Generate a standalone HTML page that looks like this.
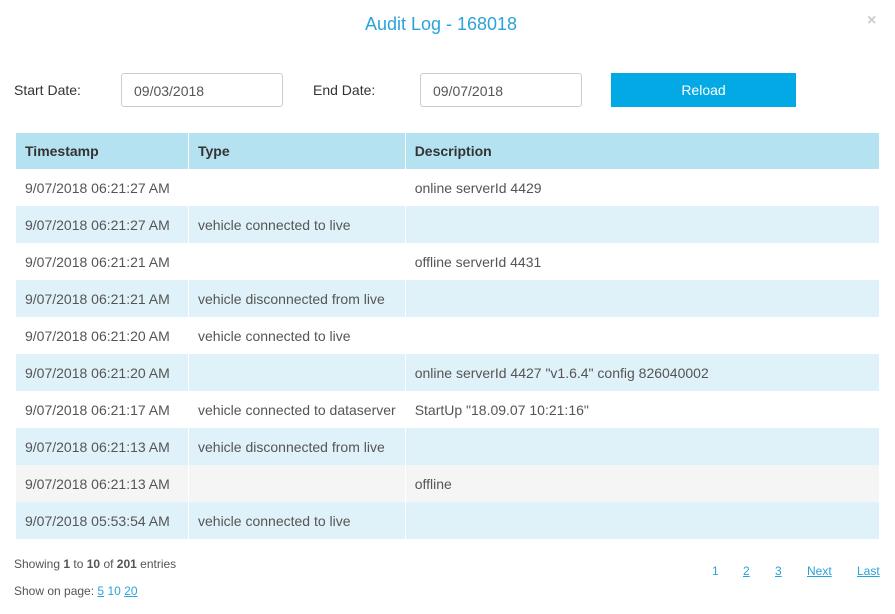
<!DOCTYPE html>
<html><head><style>
body{margin:0;width:895px;height:614px;background:#fff;font-family:"Liberation Sans",Arial,sans-serif;color:#555;position:relative;overflow:hidden}
.t{position:absolute;top:14px;left:0;width:882px;text-align:center;font-size:18px;color:#2aa3d8}
.x{position:absolute;top:12px;left:867px;font-size:16px;color:#ccc;font-weight:bold}
.lbl{position:absolute;top:82px;font-size:14px;color:#333}
.in{position:absolute;top:73px;width:162px;height:34px;border:1px solid #ccc;border-radius:3px;box-sizing:border-box;font-size:14px;padding:9px 12px;color:#555}
.btn{position:absolute;top:73px;left:611px;width:185px;height:34px;background:#03a9e4;color:#fff;font-size:14px;text-align:center;line-height:34px}
table{position:absolute;top:133px;left:15px;width:864px;border-collapse:collapse;font-size:14px}
td,th{height:37px;padding:0 9px;text-align:left;border-left:1px solid #fff;box-sizing:border-box;white-space:nowrap}
th{background:#b5e2f1;color:#333;height:36px;font-weight:bold}
tr:nth-child(odd) td{background:#dff2f9}
tr.h td{background:#f5f5f5}
.f{position:absolute;font-size:12px;color:#555}
a{color:#2aa3d8}
.p{position:absolute;top:564px;font-size:12px;color:#2aa3d8}
</style></head><body>
<div class="t">Audit Log - 168018</div>
<div class="x">×</div>
<div class="lbl" style="left:14px">Start Date:</div>
<div class="in" style="left:121px">09/03/2018</div>
<div class="lbl" style="left:313px">End Date:</div>
<div class="in" style="left:420px">09/07/2018</div>
<div class="btn">Reload</div>
<table>
<tr><th style="width:173px">Timestamp</th><th style="width:216px">Type</th><th>Description</th></tr>
<tr><td>9/07/2018 06:21:27 AM</td><td></td><td>online serverId 4429</td></tr>
<tr><td>9/07/2018 06:21:27 AM</td><td>vehicle connected to live</td><td></td></tr>
<tr><td>9/07/2018 06:21:21 AM</td><td></td><td>offline serverId 4431</td></tr>
<tr><td>9/07/2018 06:21:21 AM</td><td>vehicle disconnected from live</td><td></td></tr>
<tr><td>9/07/2018 06:21:20 AM</td><td>vehicle connected to live</td><td></td></tr>
<tr><td>9/07/2018 06:21:20 AM</td><td></td><td>online serverId 4427 "v1.6.4" config 826040002</td></tr>
<tr><td>9/07/2018 06:21:17 AM</td><td>vehicle connected to dataserver</td><td>StartUp "18.09.07 10:21:16"</td></tr>
<tr><td>9/07/2018 06:21:13 AM</td><td>vehicle disconnected from live</td><td></td></tr>
<tr class="h"><td>9/07/2018 06:21:13 AM</td><td></td><td>offline</td></tr>
<tr><td>9/07/2018 05:53:54 AM</td><td>vehicle connected to live</td><td></td></tr>
</table>
<div class="f" style="left:14px;top:557px">Showing <b>1</b> to <b>10</b> of <b>201</b> entries</div>
<div class="f" style="left:14px;top:584px">Show on page: <a href="#">5</a> <span style="color:#2aa3d8">10</span> <a href="#">20</a></div>
<span class="p" style="left:712px">1</span>
<a class="p" style="left:743px" href="#">2</a>
<a class="p" style="left:775px" href="#">3</a>
<a class="p" style="left:807px" href="#">Next</a>
<a class="p" style="left:857px" href="#">Last</a>
</body></html>
